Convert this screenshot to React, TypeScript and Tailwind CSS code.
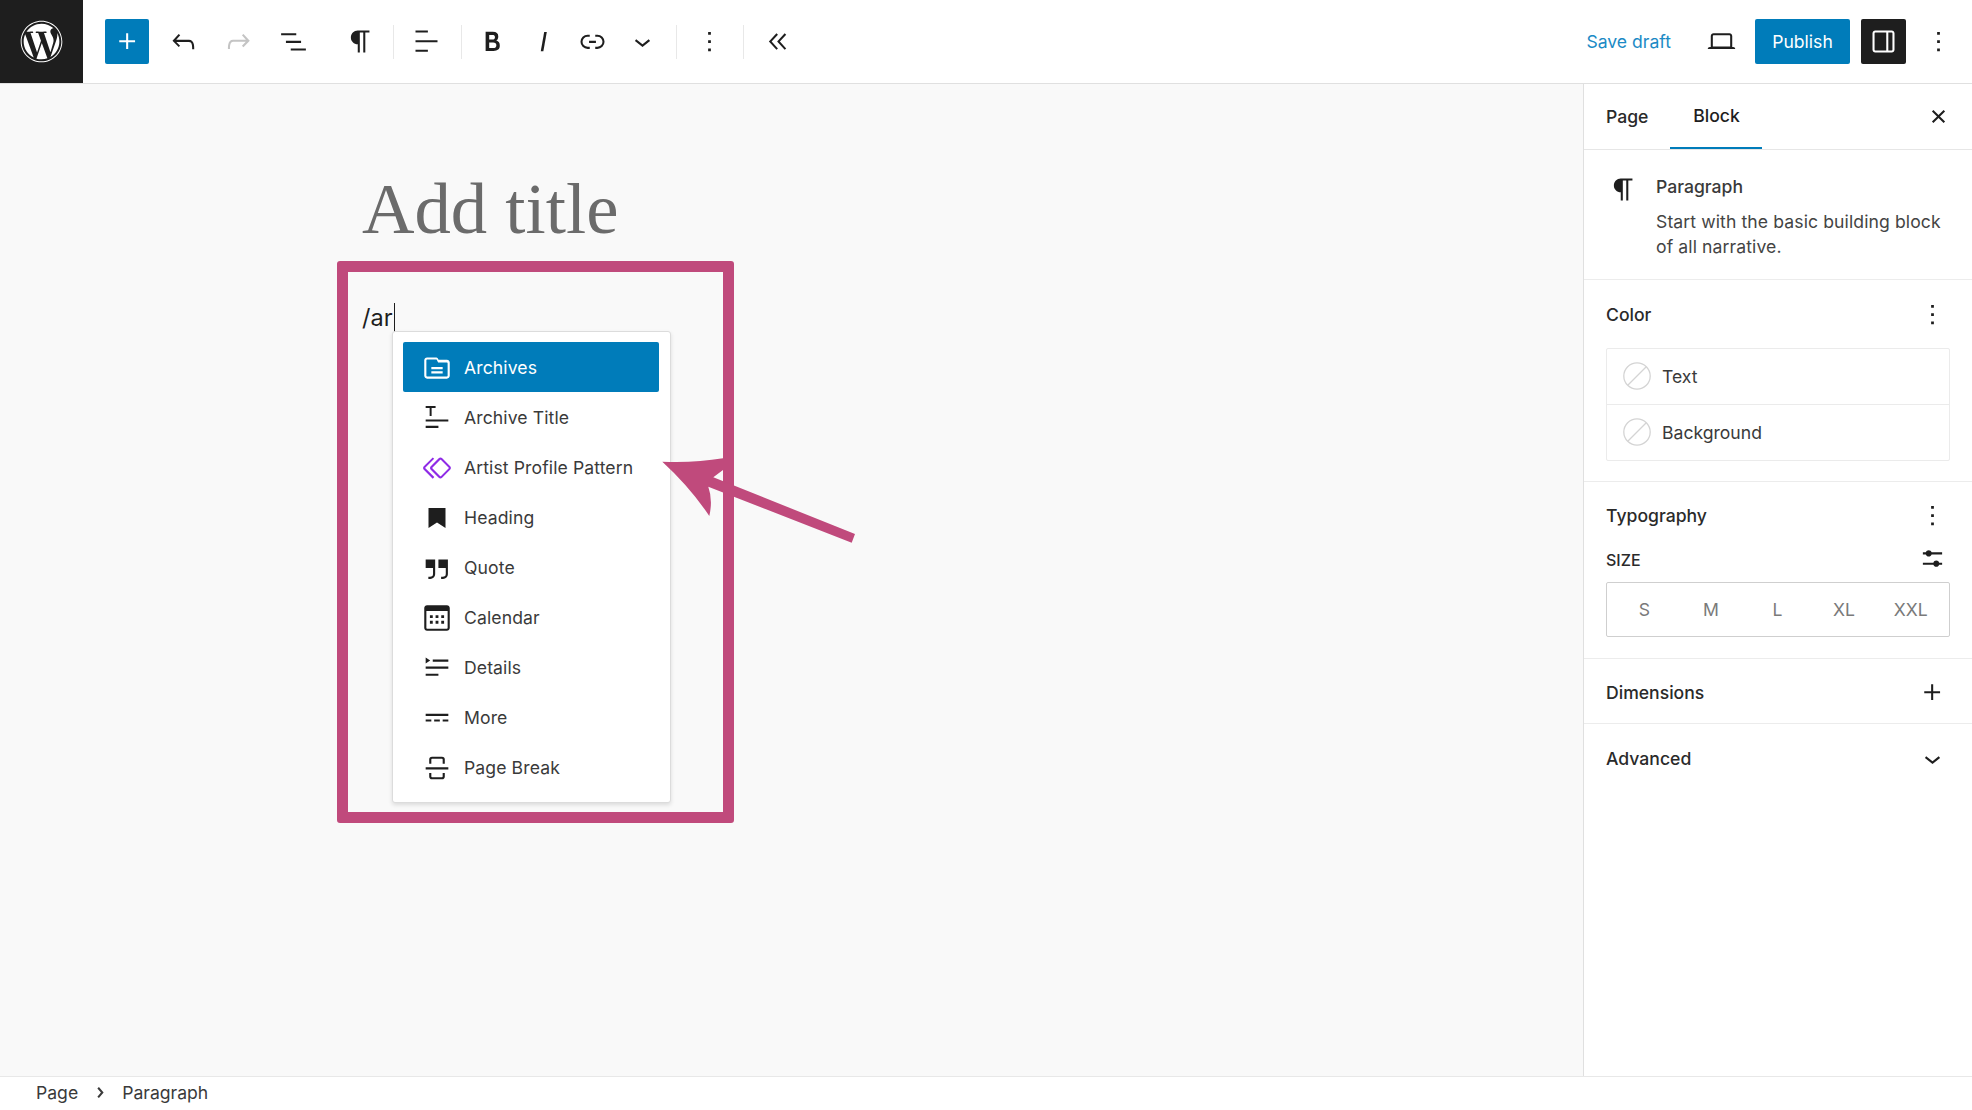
import type { ReactNode } from 'react';
import { FaWordpress } from 'react-icons/fa';

const paths = {
  plus: 'M11 12.5V17.5H12.5V12.5H17.5V11H12.5V6H11V11H6V12.5H11Z',
  undo: 'M18.3 11.7c-.6-.6-1.4-.9-2.3-.9H6.7l2.9-3.3-1.1-1-4.5 5L8.5 16l1-1-2.7-2.7H16c.5 0 .9.2 1.3.5 1 1 1 3.4 1 4.5v.3h1.5v-.2c0-1.5 0-4.3-1.5-5.7z',
  redo: 'M15.6 6.5l-1.1 1 2.9 3.3H8c-.9 0-1.7.3-2.3.9-1.4 1.5-1.4 4.2-1.4 5.6v.2h1.5v-.3c0-1.1 0-3.5 1-4.5.3-.3.7-.5 1.3-.5h9.2L14.5 15l1.1 1.1 4.6-4.6-4.6-5z',
  listView: 'M3 6h11v1.5H3V6Zm3.5 5.5h11V13h-11v-1.5ZM21 17H10v1.5h11V17Z',
  paragraph: 'm9.99609 14v-.2251l.00391.0001v6.225h1.5v-14.5h2.5v14.5h1.5v-14.5h3v-1.5h-8.50391c-2.76142 0-5 2.23858-5 5 0 2.7614 2.23858 5 5 5z',
  alignLeft: 'M13 5.5H4V4h9v1.5Zm7 7H4V11h16v1.5Zm-7 7H4V18h9v1.5Z',
  bold: 'M14.7 11.3c1-.6 1.5-1.6 1.5-3 0-2.3-1.3-3.4-4-3.4H7v14h5.8c1.4 0 2.5-.3 3.3-1 .8-.7 1.2-1.7 1.2-2.9.1-1.9-.8-3.1-2.6-3.7zm-5.1-4h2.3c.6 0 1.1.1 1.4.4.3.3.5.7.5 1.2s-.2 1-.5 1.2c-.3.3-.8.4-1.4.4H9.6V7.3zm4.6 9c-.4.3-1 .4-1.7.4H9.6v-3.9h2.9c.7 0 1.3.2 1.7.5.4.3.6.8.6 1.5s-.2 1.2-.6 1.5z',
  italic: 'M12.5 5L10 19h1.9l2.5-14z',
  link: 'M10 17.389H8.444A5.194 5.194 0 1 1 8.444 7H10v1.5H8.444a3.694 3.694 0 0 0 0 7.389H10v1.5ZM14 7h1.556a5.194 5.194 0 0 1 0 10.39H14v-1.5h1.556a3.694 3.694 0 0 0 0-7.39H14V7Zm-4.5 6h5v-1.5h-5V13Z',
  chevronDown: 'M17.5 11.6L12 16l-5.5-4.4.9-1.2L12 14l4.5-3.6 1 1.2z',
  dots: 'M13 19h-2v-2h2v2zm0-6h-2v-2h2v2zm0-6h-2V5h2v2z',
  previous: 'M11.6 7l-1.1-1L5 12l5.5 6 1.1-1L7 12l4.6-5zm6 0l-1.1-1-5.5 6 5.5 6 1.1-1-4.6-5 4.6-5z',
  desktop: 'M20.5 16h-.7V8c0-1.1-.9-2-2-2H6.2c-1.1 0-2 .9-2 2v8h-.7c-.8 0-1.5.7-1.5 1.5h20c0-.8-.7-1.5-1.5-1.5zM5.7 8c0-.3.2-.5.5-.5h11.6c.3 0 .5.2.5.5v7.6H5.7V8z',
  drawerRight: 'M18 4H6c-1.1 0-2 .9-2 2v12c0 1.1.9 2 2 2h12c1.1 0 2-.9 2-2V6c0-1.1-.9-2-2-2zm-4 14.5H6c-.3 0-.5-.2-.5-.5V6c0-.3.2-.5.5-.5h8v13zm4.5-.5c0 .3-.2.5-.5.5h-2.5v-13H18c.3 0 .5.2.5.5v12z',
  close: 'M12 13.06l3.712 3.713 1.061-1.06L13.061 12l3.712-3.712-1.06-1.06L12 10.938 8.288 7.227l-1.061 1.06L10.939 12l-3.712 3.712 1.06 1.061L12 13.061z',
  sliders: 'M19 7.5h-7.628c-.3089-.87389-1.1423-1.5-2.122-1.5-.97966 0-1.81309.62611-2.12197 1.5h-2.12803v1.5h2.12803c.30888.87389 1.14231 1.5 2.12197 1.5.97967 0 1.81307-.62611 2.12197-1.5h7.628zM19 15h-2.128c-.3089-.8739-1.1423-1.5-2.122-1.5s-1.8131.6261-2.122 1.5h-7.628v1.5h7.628c.3089.8739 1.1423 1.5 2.122 1.5s1.8131-.6261 2.122-1.5h2.128z',
  chevronRight: 'M10.8622 8.04053L14.2805 12.0286L10.8622 16.0167L9.72327 15.0405L12.3049 12.0286L9.72327 9.01672L10.8622 8.04053Z',
  archive: 'M19 6.2h-5.9l-.6-1.1C12.3 4.7 11.9 4.5 11.5 4.5H5c-1.1 0-2 .9-2 2v11c0 1.1.9 2 2 2h14c1.1 0 2-.9 2-2V8.2c0-1.1-.9-2-2-2zm.5 11.3c0 .3-.2.5-.5.5H5c-.3 0-.5-.2-.5-.5v-11c0-.3.2-.5.5-.5h6.5c.1 0 .2.1.3.2l1 2H19c.3 0 .5.2.5.5v9.3zM8 12.8h8v-1.5H8v1.5zm0 3h8v-1.5H8v1.5z',
  title: 'M4 3.5h7V5H8.2v5.5H6.8V5H4V3.5ZM4 13h16v1.5H4V13Zm0 4.5h9V19H4v-1.5Z',
  pattern: 'M21.3 10.8l-5.6-5.6c-.7-.7-1.8-.7-2.5 0l-5.6 5.6c-.7.7-.7 1.8 0 2.5l5.6 5.6c.3.3.8.5 1.2.5s.9-.2 1.2-.5l5.6-5.6c.8-.7.8-1.9.1-2.5zm-1 1.4l-5.6 5.6c-.1.1-.3.1-.4 0l-5.6-5.6c-.1-.1-.1-.3 0-.4l5.6-5.6s.1-.1.2-.1.1 0 .2.1l5.6 5.6c.1.1.1.3 0 .4zm-16.6-.4L10 5.5l-1-1-6.3 6.3c-.7.7-.7 1.8 0 2.5L9 19.5l1.1-1.1-6.3-6.3c-.2 0-.2-.2-.1-.3z',
  bookmark: 'M6 5h12v14l-6-3.8L6 19z',
  quote: 'M13 6v6h5.2v4c0 .8-.2 1.4-.5 1.7-.6.6-1.6.6-2.5.5h-.3v1.5h.5c1 0 2.3-.1 3.3-1 .6-.6 1-1.6 1-2.7V6H13zm-9 6h5.2v4c0 .8-.2 1.4-.5 1.7-.6.6-1.6.6-2.5.5h-.3v1.5h.5c1 0 2.3-.1 3.3-1 .6-.6 1-1.6 1-2.7V6H4v6z',
  calendar: 'M19 3H5c-1.1 0-2 .9-2 2v14c0 1.1.9 2 2 2h14c1.1 0 2-.9 2-2V5c0-1.1-.9-2-2-2zm.5 16c0 .3-.2.5-.5.5H5c-.3 0-.5-.2-.5-.5V7h15v12zM9 10H7v2h2v-2zm0 4H7v2h2v-2zm4-4h-2v2h2v-2zm4 0h-2v2h2v-2zm-4 4h-2v2h2v-2zm4 0h-2v2h2v-2z',
  details: 'M4 4.5l3.2 2.2L4 8.9V4.5ZM9 6h11v1.5H9V6Zm-5 5h16v1.5H4V11Zm0 5h9v1.5H4V16Z',
  more: 'M4 9v1.5h16V9H4zm12 5.5h4V13h-4v1.5zm-6 0h4V13h-4v1.5zm-6 0h4V13H4v1.5z',
  pageBreak: 'M17.5 9V6a2 2 0 0 0-2-2h-7a2 2 0 0 0-2 2v3H8V6a.5.5 0 0 1 .5-.5h7a.5.5 0 0 1 .5.5v3h1.5Zm0 6.5V18a2 2 0 0 1-2 2h-7a2 2 0 0 1-2-2v-2.5H8V18a.5.5 0 0 0 .5.5h7a.5.5 0 0 0 .5-.5v-2.5h1.5ZM4 13h16v-1.5H4V13Z',
};

// 30px slot, the glyph itself is drawn a little larger than the slot
function Icon({ d, className = '' }: { d: string; className?: string }) {
  return (
    <span className={`flex h-[30px] w-[30px] shrink-0 items-center justify-center ${className}`}>
      <svg viewBox="0 0 24 24" fill="currentColor" className="h-[33px] w-[33px] shrink-0">
        <path d={d} />
      </svg>
    </span>
  );
}

function Sep({ className }: { className: string }) {
  return <div className={`h-[34px] w-px bg-[#e8e8e8] ${className}`} />;
}

const menuItems = [
  { label: 'Archives', d: paths.archive, selected: true },
  { label: 'Archive Title', d: paths.title },
  { label: 'Artist Profile Pattern', d: paths.pattern, purple: true },
  { label: 'Heading', d: paths.bookmark },
  { label: 'Quote', d: paths.quote },
  { label: 'Calendar', d: paths.calendar },
  { label: 'Details', d: paths.details },
  { label: 'More', d: paths.more },
  { label: 'Page Break', d: paths.pageBreak },
];

function ColorRow({ label }: { label: string }) {
  return (
    <div className="flex h-[55.5px] items-center gap-[11px] pl-[16px]">
      <svg viewBox="0 0 28 28" className="h-[28px] w-[28px]">
        <circle cx="14" cy="14" r="13.2" fill="#fff" stroke="#d4d4d4" strokeWidth="1.3" />
        <path d="M5 23 23 5" stroke="#d4d4d4" strokeWidth="1.3" />
      </svg>
      <span className="text-[#3a3a3a]">{label}</span>
    </div>
  );
}

function SectionHead({ title, children }: { title: string; children: ReactNode }) {
  return (
    <div className="flex items-center justify-between pl-[22px] pr-[25px]">
      <span className="font-medium text-[#2a2a2a]">{title}</span>
      {children}
    </div>
  );
}

export default function App() {
  return (
    <div className="relative flex h-[1110px] w-[1972px] flex-col overflow-hidden bg-white font-['Inter',sans-serif] text-[17.6px] leading-[25px] text-[#1e1e1e]">
      {/* top bar */}
      <header className="flex h-[84px] shrink-0 items-center border-b border-[#e0e0e0] bg-white">
        <div className="flex h-[83px] w-[83px] shrink-0 items-center justify-center bg-[#1e1e1e] text-white">
          <FaWordpress className="h-[43px] w-[43px]" />
        </div>
        <div className="ml-[22px] flex h-[45px] w-[44px] items-center justify-center rounded-[2px] bg-[#007cba] text-white">
          <Icon d={paths.plus} />
        </div>
        <Icon d={paths.undo} className="ml-[19px]" />
        <Icon d={paths.redo} className="ml-[25px] text-[#c4c4c4]" />
        <Icon d={paths.listView} className="ml-[25px]" />
        <Icon d={paths.paragraph} className="ml-[37px]" />
        <Sep className="ml-[18px]" />
        <Icon d={paths.alignLeft} className="ml-[17px]" />
        <Sep className="ml-[20px]" />
        <Icon d={paths.bold} className="ml-[15px]" />
        <Icon d={paths.italic} className="ml-[21px]" />
        <Icon d={paths.link} className="ml-[19px]" />
        <Icon d={paths.chevronDown} className="ml-[20px]" />
        <Sep className="ml-[19px]" />
        <Icon d={paths.dots} className="ml-[17px]" />
        <Sep className="ml-[19px]" />
        <Icon d={paths.previous} className="ml-[19px]" />

        <div className="ml-auto flex items-center">
          <span className="text-[#1b8ac5]">Save draft</span>
          <Icon d={paths.desktop} className="ml-[35px]" />
          <div className="ml-[19px] flex h-[45px] w-[95px] items-center justify-center rounded-[2px] bg-[#007cba] text-white">
            Publish
          </div>
          <div className="ml-[11px] flex h-[45px] w-[45px] items-center justify-center rounded-[2px] bg-[#1e1e1e] text-white">
            <Icon d={paths.drawerRight} />
          </div>
          <Icon d={paths.dots} className="ml-[17px] mr-[19px]" />
        </div>
      </header>

      <div className="flex min-h-0 flex-1">
        {/* canvas */}
        <main className="flex-1 bg-[#f9f9f9] pl-[362px]">
          <h1 className="mt-[80px] font-['Liberation_Serif',serif] text-[72.7px] leading-[90px] font-normal text-[#6b6b6b]">
            Add title
          </h1>
          <div className="mt-[46px] flex items-center text-[23.5px] leading-[36px]">
            <span>/ar</span>
            <span className="ml-[1px] h-[31px] w-[1.5px] bg-[#1e1e1e]" />
          </div>
        </main>

        {/* settings sidebar */}
        <aside className="flex w-[389px] shrink-0 flex-col border-l border-[#e0e0e0] bg-white">
          <div className="flex h-[66px] shrink-0 border-b border-[#e6e6e6] pl-[22px] pr-[19px]">
            <div className="flex h-[65px] items-center font-medium text-[#2a2a2a]">Page</div>
            <div className="ml-[22px] flex h-[65px] w-[92px] items-center justify-center border-b-2 border-[#007cba] font-medium text-[#1e1e1e]">
              Block
            </div>
            <Icon d={paths.close} className="ml-auto mt-[17px]" />
          </div>

          <div className="flex h-[130px] shrink-0 border-b border-[#ececec] pl-[24px] pt-[24px]">
            <Icon d={paths.paragraph} />
            <div className="ml-[18px] w-[295px] text-[#3a3a3a]">
              <div className="font-medium">Paragraph</div>
              <p className="mt-[10px] tracking-[0.1px] text-[#444]">Start with the basic building block of all narrative.</p>
            </div>
          </div>

          <div className="h-[202px] shrink-0 border-b border-[#ececec] pt-[19px]">
            <SectionHead title="Color">
              <Icon d={paths.dots} />
            </SectionHead>
            <div className="ml-[22px] mt-[19px] w-[344px] divide-y divide-[#ebebeb] rounded-[2px] border border-[#ebebeb]">
              <ColorRow label="Text" />
              <ColorRow label="Background" />
            </div>
          </div>

          <div className="h-[177px] shrink-0 border-b border-[#ececec] pt-[18px]">
            <SectionHead title="Typography">
              <Icon d={paths.dots} />
            </SectionHead>
            <div className="mt-[15px] flex items-center justify-between pl-[22px] pr-[25px]">
              <span className="text-[16px] font-medium text-[#2a2a2a]">SIZE</span>
              <Icon d={paths.sliders} className="-translate-y-[2px]" />
            </div>
            <div className="ml-[22px] mt-[7px] grid h-[55px] w-[344px] grid-cols-5 items-center rounded-[2px] border border-[#cfcfcf] pl-[4px] pr-[5px] text-center text-[#7a7a7a]">
              <span>S</span>
              <span>M</span>
              <span>L</span>
              <span>XL</span>
              <span>XXL</span>
            </div>
          </div>

          <div className="flex h-[65px] shrink-0 items-center border-b border-[#ececec] pt-[3px]">
            <div className="w-full">
              <SectionHead title="Dimensions">
                <Icon d={paths.plus} />
              </SectionHead>
            </div>
          </div>
          <div className="flex h-[68px] shrink-0 items-center">
            <div className="w-full">
              <SectionHead title="Advanced">
                <Icon d={paths.chevronDown} />
              </SectionHead>
            </div>
          </div>
        </aside>
      </div>

      {/* breadcrumb */}
      <footer className="flex h-[34px] shrink-0 items-center border-t border-[#e8e8e8] bg-white pb-[2px] pl-[36px] text-[#3a3a3a]">
        <span>Page</span>
        <Icon d={paths.chevronRight} className="ml-[7px]" />
        <span className="ml-[7px]">Paragraph</span>
      </footer>

      {/* inserter popover */}
      <div className="absolute left-[392px] top-[331px] h-[472px] w-[279px] rounded-[3px] border border-[#dcdcdc] bg-white pl-[10px] pr-[11px] pt-[10px] shadow-[0_2px_4px_rgba(0,0,0,0.12)]">
        {menuItems.map((item) => (
          <div
            key={item.label}
            className={`flex h-[50px] items-center rounded-[2px] pl-[19px] pt-[1px] tracking-[0.1px] ${item.selected ? 'bg-[#007cba] text-white' : 'text-[#3a3a3a]'}`}
          >
            <span className={item.purple ? 'text-[#8f2be6]' : item.selected ? 'text-white' : 'text-[#1e1e1e]'}>
              <span className="flex h-[30px] w-[30px] items-center justify-center">
                <svg viewBox="0 0 24 24" fill="currentColor" className="h-[34px] w-[34px] shrink-0">
                  <path d={item.d} />
                </svg>
              </span>
            </span>
            <span className="ml-[12px]">{item.label}</span>
          </div>
        ))}
      </div>

      {/* annotation frame and arrow */}
      <div className="pointer-events-none absolute left-[337px] top-[261px] h-[562px] w-[397px] rounded-[3px] border-[11px] border-[#c04a7c]" />
      <svg viewBox="0 0 1972 1110" className="pointer-events-none absolute left-0 top-0 h-[1110px] w-[1972px]">
        <path
          d="M662.3 461.7Q695 463 723 458.3L723 470 713.3 477.3 855 534 851.7 542.7 708.3 486.7Q713 500 709.3 516 690 487 662.3 461.7Z"
          fill="#c04a7c"
        />
      </svg>
    </div>
  );
}
